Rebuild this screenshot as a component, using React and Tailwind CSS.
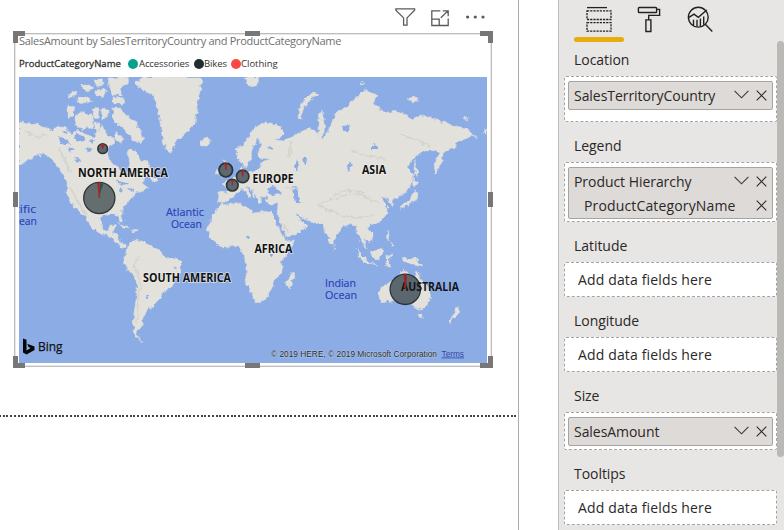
import React from "react";

const LAND = [
  // North America
  "19,122 32,123 42,126 52,130 58,126 65,128 72,134 78,130 85,134 93,137 98,132 102,125 107,135 113,137 115,143 109,147 107,153 110,162 118,167 122,174 127,175 130,162 127,152 130,148 137,153 140,160 147,162 152,169 154,175 145,178 143,184 149,188 138,192 132,197 127,205 121,212 124,222 120,221 116,214 103,215 100,220 103,230 108,231 110,225 116,225 113,232 119,236 119,243 127,245 124,248 117,243 110,237 104,234 97,232 90,225 85,217 78,210 72,205 67,195 67,182 62,172 55,163 49,157 43,153 36,156 28,160 19,165",
  // Greenland
  "143,77 135,83 147,93 153,95 158,107 160,123 162,137 166,150 172,152 177,140 187,132 195,124 197,107 200,90 202,77",
  // South America
  "128,245 135,240 145,242 152,247 160,250 163,257 173,258 183,263 180,272 174,280 172,287 163,292 158,301 154,303 154,307 148,309 145,315 142,319 143,325 137,332 138,337 143,341 136,338 133,325 134,312 136,300 137,287 135,277 128,270 123,260 127,252",
  // Africa
  "220,205 212,217 207,230 212,240 222,248 237,246 243,252 245,260 247,270 245,280 250,290 256,303 265,300 272,289 275,279 283,272 282,262 290,249 295,240 286,241 281,232 275,220 272,213 262,212 253,213 249,208 242,206 242,202",
  // Europe and Asia
  "218,192 217,202 223,204 230,199 237,193 242,188 248,198 252,196 245,187 252,190 259,203 263,202 260,197 267,195 265,200 268,204 278,204 277,214 282,228 287,238 300,233 308,225 301,221 295,213 303,219 313,222 322,224 325,231 330,244 334,245 335,238 343,227 352,223 357,231 361,241 366,248 364,238 371,243 373,235 367,228 370,225 380,222 387,215 387,205 380,197 388,198 392,206 394,198 407,192 412,183 414,174 407,167 417,155 430,150 440,152 434,163 435,174 442,163 443,153 453,148 463,140 472,135 477,138 467,128 453,125 437,120 420,115 412,119 397,110 383,113 373,103 377,95 365,89 357,97 345,108 335,113 331,125 324,137 318,134 310,128 300,132 290,137 285,140 276,141 284,134 280,127 267,122 255,127 245,142 236,149 238,158 246,168 251,160 252,150 259,139 261,144 257,153 260,158 270,159 262,162 257,170 248,173 242,167 239,174 230,180 222,184 230,190 227,193",
  // British Isles, Iceland
  "223,160 228,162 230,174 223,177 224,168", "218,169 222,168 221,174 216,174",
  "199,142 203,139 209,138 211,142 206,146 202,146",
  // Madagascar
  "288,277 293,271 295,276 290,288 286,287",
  // Australia, Tasmania, New Zealand
  "379,291 386,284 394,279 400,274 404,270 410,273 409,277 415,280 417,270 421,279 428,287 431,296 427,305 421,310 414,307 407,302 402,299 391,301 381,303 379,297",
  "418,314 423,314 421,319 419,318", "457,307 460,312 455,317 451,323 449,322 453,315",
  // Maritime South-East Asia
  "355,248 361,254 369,262 378,265 366,263 360,257", "371,254 382,247 383,254 379,260 374,258",
  "386,256 393,255 388,260 390,265 386,262", "401,257 408,259 416,259 423,266 412,264 408,263 402,260",
  "387,230 390,236 388,241", "391,242 395,246 391,246", "386,264 390,264 390,266 385,266",
  // Japan, Sakhalin
  "415,189 417,195 415,202 405,206 400,209 404,202 411,200", "413,178 418,183 414,188", "415,160 417,170 416,177 414,170",
  // Sri Lanka
  "333,246 335,248 334,250",
  // Arctic Russia
  "298,118 299,108 305,99 316,92 319,94 309,101 303,109 302,119", "318,113 322,111 325,122 324,134 319,137 319,125",
  "408,98 415,97 420,101 410,102", "362,80 365,84 361,85", "463,118 468,118 466,120", "484,130 487,128 487,136",
  // Svalbard
  "245,77 258,77 259,83 252,87 248,85",
  // Newfoundland
  "150,178 157,178 158,182 152,182",
  // Canadian Arctic
  "67,105 75,107 73,115 67,118", "75,117 83,110 92,116 93,126 84,129 76,126", "70,93 76,91 74,97 69,97",
  "78,96 86,97 92,101 87,103 78,102", "80,86 88,84 94,88 86,91", "94,80 102,78 103,84 96,86", "96,91 103,88 108,91 101,97 96,95",
  "108,78 128,77 127,84 120,89 122,95 113,95 110,87", "113,97 124,98 123,104 113,103", "93,108 99,109 98,118 92,116",
  "101,108 108,109 108,117 102,119", "112,108 120,108 129,117 137,123 141,131 144,140 138,143 132,139 125,130 119,125 113,119",
  "116,133 123,138 121,144 115,140", "94,123 100,124 99,130 94,128",
  // Caribbean
  "118,223 126,226 130,229 124,228", "131,229 138,230 134,232",
];

const WATER = [
  "267,189 273,186 277,189 282,193 276,195 268,194",
  "292,186 298,188 298,196 301,203 295,203 293,194",
  "59,136 67,139 70,144 64,145 60,142", "66,147 75,149 71,152", "76,134 83,136 86,140 80,142 75,140", "74,157 82,160 78,163",
  "90,139 95,141 92,144", "86,147 92,149 88,152", "62,130 68,131 66,134", "136,170 141,171 138,174",
  "115,182 124,181 128,184 121,185", "121,187 124,190 122,194 119,190", "127,188 134,189 131,192",
  "246,236 249,237 248,240 246,239", "270,254 274,254 273,258 270,257", "372,145 376,144 377,148 372,149", "342,126 350,125 349,131 344,131",
  "305,165 303,157 305,158 307,164", "270,145 273,148 269,149", "295,167 297,160 299,164 297,170",
  "346,173 350,162 352,164 349,171", "174,267 176,266 174,269", "145,296 148,296 147,298",
];

const RIDGES = [
  "M69 186l5 8 5 9 7 12M58 148l8 13 4 12M25 132l12 5 10-3",
  "M317 204l13-4 13-4 15-2 13 5 7 4M320 206l11 5 14 6 15 1 14-3M334 195l15-5 15 3",
  "M138 257l-4 9 4 9 3 9-3 14-1 25M289 159l2-18M286 187l12 2",
  "M400 135l18 5 13 7M350 150l16 6 20 3M284 224l5 9",
];

function Pie({ cx, cy, r, bubble = "#59646a", spread = 0.1, green = false }) {
  const x1 = cx - r * spread;
  const x2 = cx + r * spread;
  return (
    <g>
      <circle cx={cx} cy={cy} r={r} fill={bubble} stroke="#282f33" strokeWidth={r > 10 ? 1.3 : 1.7} />
      <path d={`M${cx} ${cy}L${x1} ${cy - r + 0.6}L${x2} ${cy - r + 0.6}Z`} fill="#9b2a2c" stroke="#9f2123" strokeWidth="1" />
      {green && <path d={`M${cx + 0.3} ${cy - 4}L${cx + 1.3} ${cy - r + 1}L${cx + 4} ${cy - r + 1.4}Z`} fill="#174f4c" />}
    </g>
  );
}

function Region({ x, y, w, children }) {
  return (
    <text x={x} y={y} textLength={w} lengthAdjust="spacingAndGlyphs" fontSize="11.5" fontWeight="700" fill="#111" stroke="#f1efeb" strokeWidth="1.6" strokeOpacity=".7" paintOrder="stroke">
      {children}
    </text>
  );
}

function Ocean({ x, y, w, children }) {
  return (
    <text x={x} y={y} textLength={w} lengthAdjust="spacingAndGlyphs" fontSize="11" fill="#2c40b4" stroke="#2c40b4" strokeWidth=".15">
      {children}
    </text>
  );
}

function WorldMap() {
  return (
    <svg viewBox="19 77 468 286" className="block h-[286px] w-[468px] font-['Open_Sans','Noto_Sans',sans-serif]">
      <defs>
        <filter id="coast" x="0" y="0" width="100%" height="100%" filterUnits="objectBoundingBox">
          <feTurbulence type="fractalNoise" baseFrequency="0.2" numOctaves="2" seed="4" />
          <feDisplacementMap in="SourceGraphic" scale="6" xChannelSelector="R" yChannelSelector="G" />
          <feGaussianBlur stdDeviation=".45" />
        </filter>
      </defs>
      <rect x="19" y="77" width="468" height="286" fill="#8cace6" />
      <g filter="url(#coast)">
        <rect x="9" y="67" width="488" height="306" fill="#8cace6" />
        {LAND.map((points, i) => (
          <polygon key={i} points={points} fill="#e2e1dc" stroke="#d3d6da" strokeWidth=".5" />
        ))}
        {WATER.map((points, i) => (
          <polygon key={i} points={points} fill="#8cace6" />
        ))}
        {RIDGES.map((d, i) => (
          <path key={i} d={d} fill="none" stroke="#d5d3cd" strokeWidth="1.6" />
        ))}
      </g>
      <Ocean x={14} y={213} w={22}>cific</Ocean>
      <Ocean x={14} y={225} w={23}>cean</Ocean>
      <Ocean x={166} y={216} w={38}>Atlantic</Ocean>
      <Ocean x={171} y={228} w={31}>Ocean</Ocean>
      <Ocean x={325} y={287} w={31}>Indian</Ocean>
      <Ocean x={325} y={299} w={32}>Ocean</Ocean>
      <Region x={78} y={177.3} w={90}>NORTH AMERICA</Region>
      <Region x={143} y={282.3} w={88}>SOUTH AMERICA</Region>
      <Region x={252.5} y={182.5} w={41}>EUROPE</Region>
      <Region x={362} y={173.5} w={24}>ASIA</Region>
      <Region x={254.5} y={252.5} w={38}>AFRICA</Region>
      <g opacity=".96">
        <Pie cx={102.7} cy={148.7} r={4.8} spread={0.3} />
        <Pie cx={99.3} cy={198} r={15.6} bubble="#606a6b" green />
        <Pie cx={225.8} cy={170} r={6.8} />
        <Pie cx={242.7} cy={176.4} r={6.2} spread={0.15} />
        <Pie cx={232.3} cy={185.2} r={5.8} />
        <Pie cx={405.3} cy={289.3} r={15.2} bubble="#56636a" spread={0.07} />
      </g>
      <text x={401} y={290.5} textLength={58} lengthAdjust="spacingAndGlyphs" fontSize="11.5" fontWeight="700" fill="#151515">AUSTRALIA</text>
      <path d="M405.3 289v-14" stroke="#9f2123" strokeWidth="1.8" />
      <path d="M23 338.5l3.5 1.3v10.7l4.2-2.5-2.2-1-1.3-3.2 7.3 2.6v3.6l-8 4.5-3.5-2z" fill="#050505" />
      <text x={38} y={351.3} textLength={24.5} lengthAdjust="spacingAndGlyphs" fontSize="13" fill="#111" stroke="#111" strokeWidth=".25">Bing</text>
      <g fontFamily="Liberation Sans, Arial, sans-serif" fontSize="8.2">
        <text x={271} y={356.5} textLength={166} lengthAdjust="spacingAndGlyphs" fill="#2c2c2c" stroke="#d5dcea" strokeWidth="1" strokeOpacity=".5" paintOrder="stroke">© 2019 HERE, © 2019 Microsoft Corporation</text>
        <text x={441.5} y={356.5} textLength={22.5} lengthAdjust="spacingAndGlyphs" fill="#3648a4" textDecoration="underline">Terms</text>
      </g>
    </svg>
  );
}

function VisualToolbar() {
  return (
    <div className="flex h-[31px] items-start gap-4 pl-[395px] pt-2">
      <svg viewBox="0 0 21 18" className="h-[18px] w-[21px]" fill="none" stroke="#5c5a58" strokeWidth="1.3">
        <path d="M.9.9h18.7v1.4L12 9.9v7.3H8.6V9.9L.9 2.3z" />
      </svg>
      <svg viewBox="0 0 18 17" className="-ml-px mt-[2px] h-[17px] w-[18px]" fill="none" stroke="#5c5a58" strokeWidth="1.3">
        <path d="M9.3.9H.8v14.6h16.4V8.5M.8 9.2h7.4v6.3M9.8 7.8L17 .9M11.8.9h5.4v5.3" />
      </svg>
      <svg viewBox="0 0 20 4" className="mt-[7px] h-1 w-5" fill="#5c5a58">
        <circle cx="2.6" cy="2" r="1.6" />
        <circle cx="10.3" cy="2" r="1.6" />
        <circle cx="18" cy="2" r="1.6" />
      </svg>
    </div>
  );
}

function SelectionHandles() {
  return (
    <>
      <i className="absolute left-0 top-0 h-3 w-3 border-l-[5px] border-t-[5px] border-[#777]" />
      <i className="absolute right-0 top-0 h-3 w-[13px] border-r-[5px] border-t-[5px] border-[#777]" />
      <i className="absolute bottom-0 left-0 h-3 w-3 border-b-[5px] border-l-[5px] border-[#777]" />
      <i className="absolute bottom-0 right-0 h-3 w-[13px] border-b-[5px] border-r-[5px] border-[#777]" />
      <i className="absolute left-[232px] top-0 h-[5px] w-[15px] bg-[#777]" />
      <i className="absolute bottom-0 left-[232px] h-[5px] w-[15px] bg-[#777]" />
      <i className="absolute left-0 top-[161px] h-[15px] w-[5px] bg-[#777]" />
      <i className="absolute right-0 top-[161px] h-[15px] w-[5px] bg-[#777]" />
    </>
  );
}

function MapVisual() {
  return (
    <div className="relative ml-[13px] h-[337px] w-[480px] p-px">
      <div className="h-[335px] w-[478px] pt-px">
        <div className="h-[334px] border border-[#bdbdbd] pl-1 shadow-[inset_0_0_0_1px_#e8e8e8]">
          <h2 className="h-[14px] whitespace-nowrap text-[11px] leading-[14px] tracking-[-0.29px] text-[#707070]">
            SalesAmount by SalesTerritoryCountry and ProductCategoryName
          </h2>
          <div className="flex h-[29px] items-center whitespace-nowrap pt-[3px] text-[9.5px] leading-none text-[#333]">
            <span className="w-[109px] tracking-[0.05px] [-webkit-text-stroke:0.3px_#333]">ProductCategoryName</span>
            <i className="mr-px h-[10px] w-[10px] rounded-full bg-[#05a08f]" />
            <span className="w-[55px] tracking-[-0.1px]">Accessories</span>
            <i className="h-[10px] w-[10px] rounded-full bg-[#222d31]" />
            <span className="w-[27px] tracking-[-0.1px]">Bikes</span>
            <i className="h-[10px] w-[10px] rounded-full bg-[#fd4743]" />
            <span>Clothing</span>
          </div>
          <WorldMap />
        </div>
      </div>
      <SelectionHandles />
    </div>
  );
}

function Chevron() {
  return (
    <svg viewBox="0 0 15 9" className="-mt-0.5 h-[9px] w-[15px]" fill="none" stroke="#3c3a39" strokeWidth="1.1">
      <path d="M.6.8l6.9 7 6.9-7" />
    </svg>
  );
}

function Cross() {
  return (
    <svg viewBox="0 0 11 11" className="h-[11px] w-[11px]" fill="none" stroke="#2c2a29" strokeWidth="1.1">
      <path d="M.7.7l9.6 9.6M10.3.7L.7 10.3" />
    </svg>
  );
}

function FieldRow({ name, nested }) {
  return (
    <div className={nested ? "-mt-[2px] flex h-[25px] items-center pl-[15px] pr-[5px] tracking-[0.15px]" : "flex h-[27px] items-center pl-[5px] pr-[5px]"}>
      <span className="flex-1">{name}</span>
      {!nested && <Chevron />}
      <span className="ml-[7px]"><Cross /></span>
    </div>
  );
}

function Well({ title, height, children }) {
  return (
    <section>
      <h3 className="h-8 pl-[10px] leading-8">{title}</h3>
      <div className={`${height} rounded-[2px] border border-dashed border-[#a6a4a2] bg-white`}>{children}</div>
    </section>
  );
}

function Pill({ height, children }) {
  return <div className={`${height} mx-[3px] mt-1 rounded-[2px] border border-[#a6a4a2] bg-[#dedad8]`}>{children}</div>;
}

function Empty() {
  return <p className="pl-[13px] leading-[33px] tracking-[0.15px]">Add data fields here</p>;
}

function PaneTabs() {
  return (
    <div className="flex h-11 pl-[10px]">
      <div className="w-[50px]">
        <div className="flex h-[37px] justify-center pt-[6px]">
          <svg viewBox="0 0 26 26" className="h-[26px] w-[26px]" fill="none" stroke="#222" strokeWidth="1.3">
            <path d="M1 1.6h20" />
            <path d="M1 4.9h24v8.6H1zM1 16.6h24v8.5H1z" strokeDasharray="2.2 1" />
          </svg>
        </div>
        <div className="h-[5px] rounded-full bg-[#e6ad0c]" />
      </div>
      <svg viewBox="0 0 24 27" className="ml-[13px] mt-[6px] h-[27px] w-6" fill="none" stroke="#222" strokeWidth="1.4">
        <rect x="1.4" y="1.5" width="18.2" height="5" rx=".8" />
        <path d="M19.6 3.4h3v6H11.7v4.2M8.9 13.9h5v11.6h-5z" />
      </svg>
      <svg viewBox="0 0 27 27" className="ml-[26px] mt-[6px] h-[27px] w-[27px]" fill="none" stroke="#222" strokeWidth="1.4">
        <circle cx="11.3" cy="11.2" r="9.9" />
        <path d="M18.3 18.2l7 7.3M2 11.4l5-3.3 4.3 3.3 8.5-7.4M6.5 19v-5.2M10 20.5v-6.8M13.4 20.7v-8.3M16.7 18.8v-8.2" />
      </svg>
    </div>
  );
}

export default function App() {
  return (
    <main className="flex h-[530px] w-[784px] overflow-hidden bg-white font-['Open_Sans','Noto_Sans',sans-serif]">
      <div className="flex w-[519px] flex-col border-r border-[#aaa]">
        <VisualToolbar />
        <MapVisual />
        <svg viewBox="0 0 518 2" className="mt-[47px] h-[2px] w-[518px]">
          <path d="M-1 1H518" stroke="#444" strokeWidth="2" strokeDasharray="2 1.735" shapeRendering="crispEdges" />
        </svg>
      </div>
      <aside className="ml-[39px] flex flex-1 border-l border-[#bfbdb9] bg-[#e7e6e4] text-[14px] tracking-[-0.05px] text-[#2a2827]">
        <div className="flex w-[218px] shrink-0 flex-col pl-[5px]">
          <PaneTabs />
          <div className="flex w-[213px] flex-col">
            <Well title="Location" height="h-[46px]">
              <Pill height="h-[29px]"><FieldRow name="SalesTerritoryCountry" /></Pill>
            </Well>
            <div className="mt-2">
              <Well title="Legend" height="h-[60px]">
                <Pill height="h-[52px]">
                  <FieldRow name="Product Hierarchy" />
                  <FieldRow name="ProductCategoryName" nested />
                </Pill>
              </Well>
            </div>
            <div className="mt-2"><Well title="Latitude" height="h-[35px]"><Empty /></Well></div>
            <div className="mt-2"><Well title="Longitude" height="h-[35px]"><Empty /></Well></div>
            <div className="mt-2">
              <Well title="Size" height="h-[38px]">
                <Pill height="h-[29px]"><FieldRow name="SalesAmount" /></Pill>
              </Well>
            </div>
            <div className="mt-2"><Well title="Tooltips" height="h-[35px]"><Empty /></Well></div>
          </div>
        </div>
        <div className="mt-[41px] h-[416px] w-[7px] rounded-full bg-[#bab9b5]" />
      </aside>
    </main>
  );
}
